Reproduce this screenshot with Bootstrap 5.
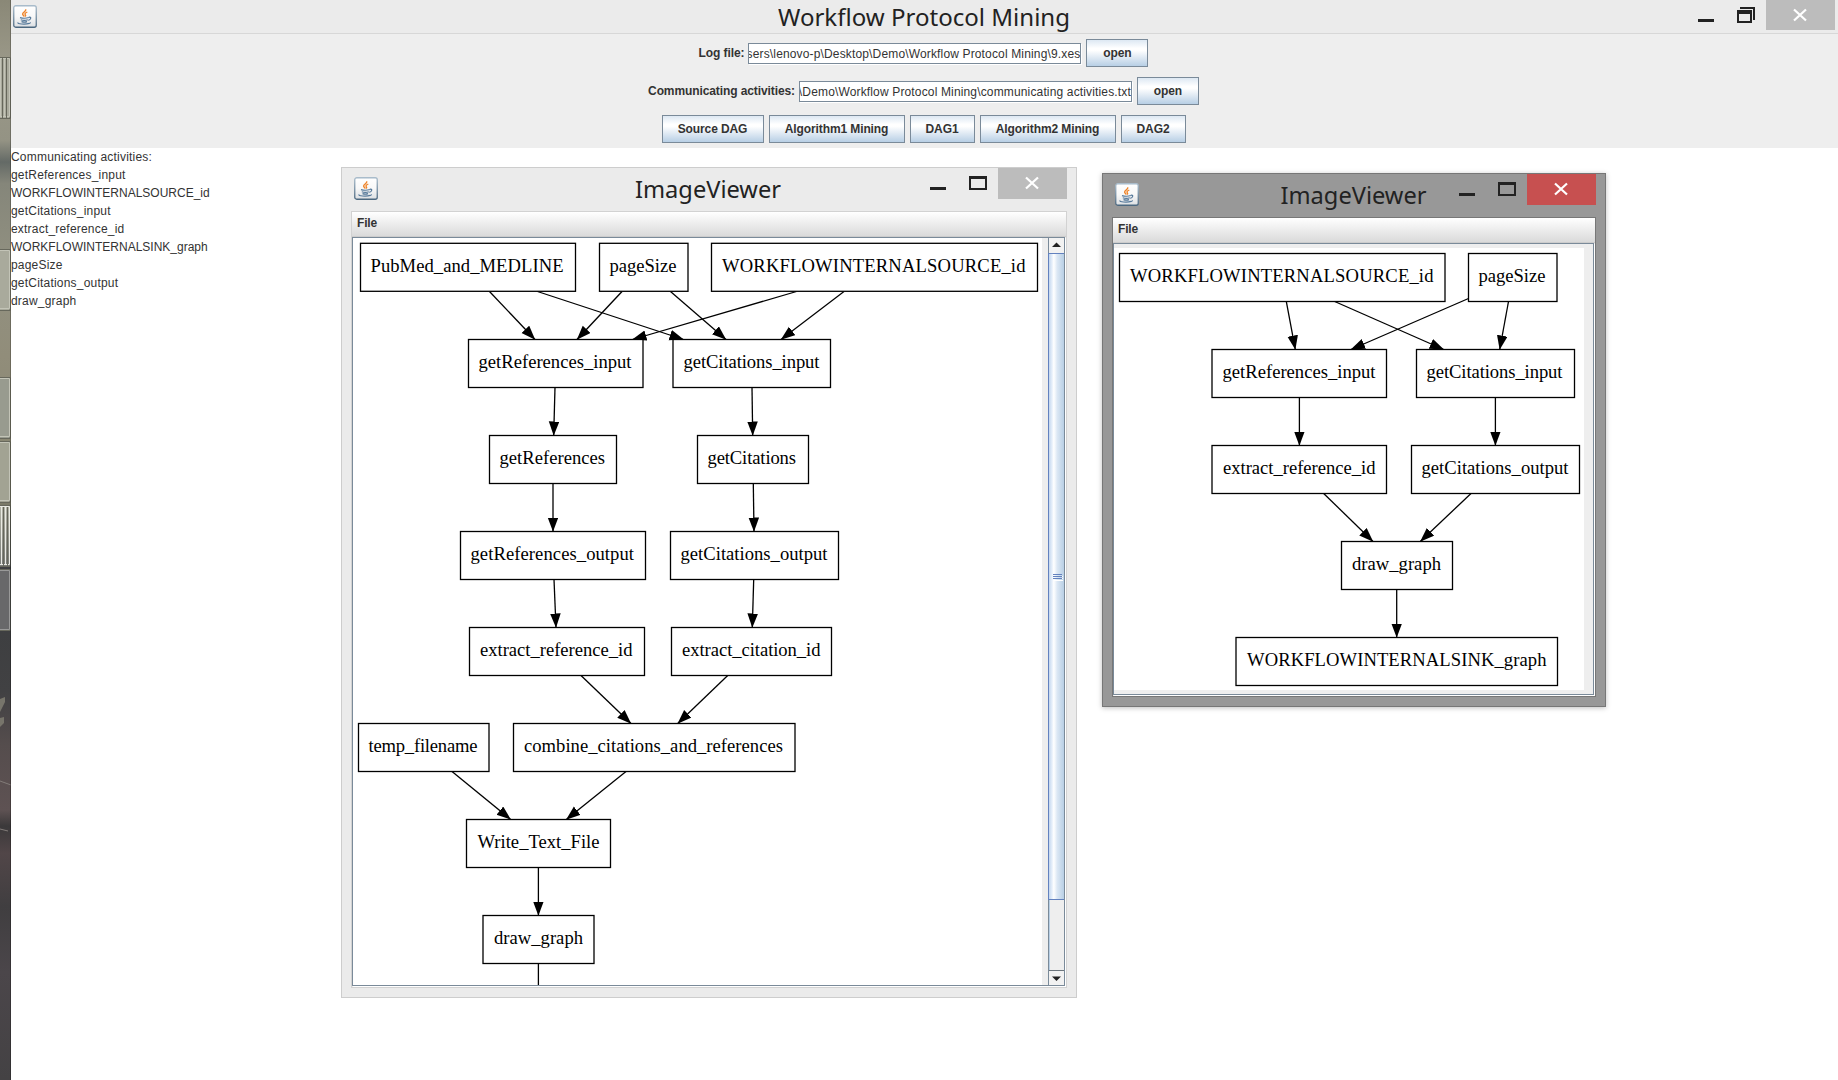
<!DOCTYPE html>
<html lang="en">
<head>
<meta charset="utf-8">
<title>Workflow Protocol Mining</title>
<link rel="stylesheet" href="https://cdn.jsdelivr.net/npm/bootstrap@5.3.0/dist/css/bootstrap.min.css">
<style>
body{width:1838px;height:1080px;font-family:"Liberation Sans",Arial,sans-serif;font-size:12px;color:#333;line-height:18px}
.desk{width:11px;height:1080px}
.titlebar{background:#ebebeb;height:34px;border-bottom:1px solid #d7d7d7}
.titlebar .appicon{margin:5px 0 0 2px}
.caption{font-family:"Noto Sans",sans-serif;font-size:23px;line-height:34px;color:#222;white-space:nowrap}
.toolbox{background:#eee;height:114px;padding:5px 2px 0 0;gap:10px}
.formrow{height:28px;font-weight:700;letter-spacing:-.1px}
.jbtn{height:28px;padding:0;border:1px solid #7a8a99;border-radius:0;font-size:12px;line-height:24px;font-weight:700;color:#333;letter-spacing:-.1px;background:linear-gradient(#dde8f3 0,#fff 32%,#fff 40%,#b8cfe5 100%)}
.jfield{width:333px;height:21px;border:1px solid #7a8a99;box-shadow:1px 1px 0 #fff;background:#fff;font-weight:400;line-height:20px;padding:0 1px;letter-spacing:.15px;white-space:nowrap}
.w52{width:62px;margin-left:5px}.w-src{width:102px}.w-alg{width:136px}.w-dag{width:65px}
.btnrow{gap:5px}
.log div{letter-spacing:.2px}
.log div.up{letter-spacing:0}
.win{background:#ebebeb;border:1px solid #cdcdcd;padding:0 9px 9px}
.win.one{left:341px;top:167px;width:736px;height:831px}
.win.two{left:1102px;top:173px;width:504px;height:534px;background:#989898;border-color:#777;box-shadow:0 1px 5px rgba(0,0,0,.25)}
.winhead{height:43px}
.client{border:1px solid #d2d2d2;background:#eee}
.two .client{border-color:#777}
.menubar{height:25px;background:linear-gradient(#fff,#dadada);border-bottom:1px solid #ccc;padding-left:5px;line-height:23px;font-weight:700;letter-spacing:-.2px}
.pane{border:1px solid #7a8a99;box-shadow:1px 1px 0 #fff;margin-right:1px;margin-bottom:1px}
.vbar{width:16px;background:#eee;border-left:1px solid #7a8a99}
.arrowbox{height:15px;background:#f2f2f2}
.thumb{height:647px;padding-top:2px;border:1px solid #6382bf;border-right:0;margin-left:-1px;background:linear-gradient(90deg,#c3d6ee,#e6effa 20%,#fff 32%,#dbe7f4 55%,#b8cfe5)}
.track{border-left:1px solid #b8cfe5}
svg{display:block}
.dag text{font-family:"Liberation Serif","Times New Roman",serif;font-size:18.6px;fill:#000}
.dag rect{fill:#fff;stroke:#000;stroke-width:1.3}
.dag path.e{stroke:#000;stroke-width:1.3;fill:none;marker-end:url(#tip)}
</style>
<script src="https://cdn.jsdelivr.net/npm/bootstrap@5.3.0/dist/js/bootstrap.bundle.min.js"></script>
</head>
<body class="d-flex bg-white overflow-hidden position-relative">
<svg width="0" height="0" class="position-absolute">
  <defs>
    <linearGradient id="cupbg" x1="0" y1="0" x2="0" y2="1"><stop offset="0" stop-color="#fff"/><stop offset=".5" stop-color="#f8f8f8"/><stop offset="1" stop-color="#dcdfe2"/></linearGradient>
    <linearGradient id="cupbd" x1="0" y1="0" x2="0" y2="1"><stop offset="0" stop-color="#a9bccb"/><stop offset="1" stop-color="#4c6880"/></linearGradient>
    <symbol id="java" viewBox="0 0 24 23">
      <rect x=".75" y=".75" width="22.5" height="21.5" rx="2" fill="url(#cupbg)" stroke="url(#cupbd)" stroke-width="1.3"/>
      <path d="M12.7 4.2c1 2-3.6 3.3-3.1 5 .2.900 1.200 1.300 1.500 2.400M14.300 7c-1.700.8-3 1.700-2 2.700.700.700.3 1.400-.2 1.900" fill="none" stroke="#ee8328" stroke-width="1.350"/>
      <path d="M7 12.600c2.500.8 6.500.7 9-.1M7.800 14.700c2 .7 5 .7 7 0M8.500 16.600c1.700.6 4 .6 5.600 0M15.800 12.300c2.800-.7 2.500 2.300-.5 3M5.300 17.600c-2 1.400 7 2 11 .8 1-.3 1.400-.7 1-1" fill="none" stroke="#56799a" stroke-width="1.200"/>
    </symbol>
    <marker id="tip" markerUnits="userSpaceOnUse" markerWidth="15" markerHeight="12" refX="14" refY="5.300" orient="auto"><path d="M0 0 14.300 5.300 0 10.600z"/></marker>
  </defs>
</svg>

<!-- strip of the desktop left of the main window -->
<svg class="desk flex-shrink-0" width="11" height="1080" viewBox="0 0 11 1080">
  <defs>
    <linearGradient id="wall" x1="0" y1="0" x2="0" y2="1">
      <stop offset="0" stop-color="#8a8877"/><stop offset=".06" stop-color="#9b9989"/><stop offset=".13" stop-color="#949384"/><stop offset=".15" stop-color="#646a66"/><stop offset=".17" stop-color="#85867a"/><stop offset=".25" stop-color="#929181"/><stop offset=".33" stop-color="#918d7a"/><stop offset=".46" stop-color="#85846f"/><stop offset=".49" stop-color="#55564f"/><stop offset=".53" stop-color="#3b3d3f"/><stop offset=".64" stop-color="#414143"/><stop offset=".69" stop-color="#554d4d"/><stop offset=".75" stop-color="#5e5253"/><stop offset=".765" stop-color="#3b393a"/><stop offset=".79" stop-color="#514648"/><stop offset=".84" stop-color="#403e40"/><stop offset=".9" stop-color="#4b464a"/><stop offset="1" stop-color="#444244"/>
    </linearGradient>
    <linearGradient id="pale" x1="0" y1="0" x2="0" y2="1"><stop offset="0" stop-color="#b4b6a8"/><stop offset="1" stop-color="#777b77"/></linearGradient>
  </defs>
  <path fill="url(#wall)" d="M0 0h11v1080H0z"/>
  <g stroke="#67685c" fill="#a9aa9c"><path d="M-1 57.500h11v61H-1z"/><path d="M-1 249.500h11v61H-1z"/><path d="M-1 377.500h11v61H-1z" fill="#989b8f"/><path d="M-1 441.500h11v61H-1z" fill="#a2a393"/><path d="M-1 505.500h11v61H-1z" fill="url(#pale)"/><path d="M-1 569.500h11v61H-1z" fill="#68686a"/></g>
  <g stroke="#c3c4b7" fill="none"><path d="M0 58.500h9.500v58H0M.5 58v59M4.500 58v59M0 250.500h9.500v58H0M0 378.500h9.500v58H0M0 442.500h9.500v58H0"/><path stroke="#e9eae2" d="M0 506.500h9.500v58H0M1.500 507v58M5.500 507v58"/><path stroke="#999" d="M0 570.500h9.500v59H0"/></g>
  <path stroke="#66675b" d="M2.500 58v60M6.500 58v60"/><path stroke="#66675b" d="M3.500 507v59M7.500 507v59"/>
  <path d="M0 699 5 697v5L0 712zM0 718l4-1v6l-4 4z" fill="#77756b"/><path d="M0 781 11 785M0 829 8 831" stroke="#827c79"/>
  <path d="M10.500 0v1080" stroke="#000" stroke-opacity=".25"/>
</svg>

<main class="flex-grow-1">
  <header class="titlebar d-flex position-relative justify-content-center">
    <svg class="appicon position-absolute start-0 top-0" width="24" height="23"><use href="#java"/></svg>
    <svg width="294" height="33"><text class="caption" x="0" y="25.500" textLength="292" lengthAdjust="spacingAndGlyphs" fill="#222">Workflow Protocol Mining</text></svg>
    <svg class="position-absolute end-0 top-0" width="140" height="33">
      <path d="M0 19h16v3H0z" fill="#222"/>
      <path d="M42 7h15v13h-2V9H42zM39 10h15v13H39zm2 4v7h11v-7z" fill="#222" fill-rule="evenodd"/>
      <path d="M68 0h69v30H68z" fill="#bcbcbc"/>
      <path d="m96 9.500 12 11M108 9.500l-12 11" stroke="#fff" stroke-width="2.200"/>
    </svg>
  </header>

  <section class="toolbox d-flex flex-column align-items-center">
    <div class="formrow d-flex align-items-center">
      <span class="me-1">Log file:</span>
      <div class="jfield d-flex justify-content-end overflow-hidden pe-0"><span>sers\lenovo-p\Desktop\Demo\Workflow Protocol Mining\9.xes</span></div>
      <button class="btn jbtn w52">open</button>
    </div>
    <div class="formrow d-flex align-items-center">
      <span class="me-1">Communicating activities:</span>
      <div class="jfield d-flex justify-content-end overflow-hidden pe-0"><span>\Demo\Workflow Protocol Mining\communicating activities.txt</span></div>
      <button class="btn jbtn w52">open</button>
    </div>
    <div class="btnrow d-flex">
      <button class="btn jbtn w-src">Source DAG</button>
      <button class="btn jbtn w-alg">Algorithm1 Mining</button>
      <button class="btn jbtn w-dag">DAG1</button>
      <button class="btn jbtn w-alg">Algorithm2 Mining</button>
      <button class="btn jbtn w-dag">DAG2</button>
    </div>
  </section>

  <section class="log">
    <div>Communicating activities:</div>
    <div>getReferences_input</div>
    <div class="up">WORKFLOWINTERNALSOURCE_id</div>
    <div>getCitations_input</div>
    <div>extract_reference_id</div>
    <div class="up">WORKFLOWINTERNALSINK_graph</div>
    <div>pageSize</div>
    <div>getCitations_output</div>
    <div>draw_graph</div>
  </section>
</main>

<!-- first viewer: the source graph -->
<section class="win one position-absolute d-flex flex-column">
  <div class="winhead">
    <svg width="716" height="43" viewBox="351 168 716 43">
      <use href="#java" x="354" y="177" width="24" height="23"/>
      <text class="caption" x="635" y="198" textLength="146" lengthAdjust="spacingAndGlyphs" fill="#222">ImageViewer</text>
      <path d="M930 187h16v3h-16z" fill="#222"/>
      <path d="M969 176h18v14h-18zm2 3v9h14v-9z" fill="#222" fill-rule="evenodd"/>
      <path d="M998 168h69v31h-69z" fill="#bcbcbc"/>
      <path d="m1026 177.500 12 11M1038 177.500l-12 11" stroke="#fff" stroke-width="2.200"/>
    </svg>
  </div>
  <div class="client flex-grow-1 d-flex flex-column">
    <div class="menubar">File</div>
    <div class="pane flex-grow-1 d-flex justify-content-between overflow-hidden">
      <svg class="dag flex-shrink-0 bg-white" width="689" height="747" viewBox="353 238 689 747">
        <path class="e" d="M489.500 291.500 535 339.500"/><path class="e" d="M537.500 291.500 683.500 339.500"/>
        <path class="e" d="M622 291.500 577 339.500"/><path class="e" d="M670.500 291.500 726 339.500"/>
        <path class="e" d="M796.500 291.500 632.500 339.500"/><path class="e" d="M844 291.500 781 339.500"/>
        <path class="e" d="M555 387.500 553.700 435.500"/><path class="e" d="M752 387.500 752.700 435.500"/>
        <path class="e" d="M553 483.500V531.500"/><path class="e" d="M753.300 483.500 754 531.500"/>
        <path class="e" d="M554 579.500 556 627.500"/><path class="e" d="M753.700 579.500 752.300 627.500"/>
        <path class="e" d="M581 675.500 631 723.500"/><path class="e" d="M727.700 675.500 677.700 723.500"/>
        <path class="e" d="M452 771.500 510.700 819.500"/><path class="e" d="M626 771.500 566.300 819.500"/>
        <path class="e" d="M538.400 867.500V915.500"/><path class="e" d="M538.400 963.500V1011"/>
        <rect x="360.500" y="243.300" width="215" height="48"/><text x="370.500" y="272" textLength="193">PubMed_and_MEDLINE</text>
        <rect x="599.500" y="243.300" width="88.500" height="48"/><text x="609.500" y="272" textLength="67">pageSize</text>
        <rect x="711.500" y="243.300" width="326" height="48"/><text x="722" y="272" textLength="303.500">WORKFLOWINTERNALSOURCE_id</text>
        <rect x="468.500" y="339.500" width="174.500" height="48"/><text x="478.500" y="368" textLength="153">getReferences_input</text>
        <rect x="673" y="339.500" width="157.500" height="48"/><text x="683.500" y="368" textLength="136">getCitations_input</text>
        <rect x="489.500" y="435.500" width="127" height="48"/><text x="499.500" y="464" textLength="105.500">getReferences</text>
        <rect x="697.500" y="435.500" width="111" height="48"/><text x="707.500" y="464" textLength="88.500">getCitations</text>
        <rect x="460.500" y="531.500" width="185" height="48"/><text x="470.500" y="560" textLength="163.500">getReferences_output</text>
        <rect x="670.500" y="531.500" width="168" height="48"/><text x="680.500" y="560" textLength="147">getCitations_output</text>
        <rect x="469.500" y="627.500" width="175" height="48"/><text x="480" y="656" textLength="152.500">extract_reference_id</text>
        <rect x="671.500" y="627.500" width="160" height="48"/><text x="682" y="656" textLength="138.500">extract_citation_id</text>
        <rect x="358.500" y="723.500" width="130.500" height="48"/><text x="368.500" y="752" textLength="109">temp_filename</text>
        <rect x="513.500" y="723.500" width="281.500" height="48"/><text x="524" y="752" textLength="259">combine_citations_and_references</text>
        <rect x="466.500" y="819.500" width="144" height="48"/><text x="477.500" y="848" textLength="122">Write_Text_File</text>
        <rect x="483" y="915.500" width="111" height="48"/><text x="494" y="944" textLength="89">draw_graph</text>
      </svg>
      <div class="vbar d-flex flex-column">
        <div class="arrowbox"><svg width="15" height="15"><path d="M3 9h9L7.500 4.500z" fill="#222"/></svg></div>
        <div class="thumb d-flex align-items-center"><svg class="ms-1" width="10" height="7"><path d="M1 1.500h9M1 3.500h9M1 5.500h9" stroke="#fff" transform="translate(0 1)"/><path d="M0 .5h9M0 2.500h9M0 4.500h9" stroke="#6382bf"/></svg></div>
        <div class="track flex-grow-1"></div>
        <div class="arrowbox border-top border-secondary"><svg width="15" height="14"><path d="M3 5.500h9L7.500 10z" fill="#222"/></svg></div>
      </div>
    </div>
  </div>
</section>

<!-- second viewer: the mined graph -->
<section class="win two position-absolute d-flex flex-column">
  <div class="winhead">
    <svg width="484" height="43" viewBox="1112 174 484 43">
      <use href="#java" x="1115" y="183" width="24" height="23"/>
      <text class="caption" x="1280.500" y="204" textLength="146" lengthAdjust="spacingAndGlyphs" fill="#222">ImageViewer</text>
      <path d="M1459 193h16v3h-16z" fill="#222"/>
      <path d="M1498 182h18v14h-18zm2 3v9h14v-9z" fill="#222" fill-rule="evenodd"/>
      <path d="M1527 174h69v31h-69z" fill="#c75050"/>
      <path d="m1555 183.500 12 11M1567 183.500l-12 11" stroke="#fff" stroke-width="2.200"/>
    </svg>
  </div>
  <div class="client flex-grow-1 d-flex flex-column">
    <div class="menubar">File</div>
    <div class="pane flex-grow-1 overflow-hidden d-flex align-items-center">
      <svg class="dag flex-shrink-0 bg-white" width="470" height="442" viewBox="1114 248 470 442">
        <path class="e" d="M1286.300 301.500 1295.300 349.500"/><path class="e" d="M1334.700 301.500 1443.700 349.500"/>
        <path class="e" d="M1468.500 298.500 1351 349.500"/><path class="e" d="M1508.500 301.500 1499.700 349.500"/>
        <path class="e" d="M1299.400 397.500V445.500"/><path class="e" d="M1495.400 397.500V445.500"/>
        <path class="e" d="M1323.700 493.500 1373 541.500"/><path class="e" d="M1471 493.500 1420.300 541.500"/>
        <path class="e" d="M1396.700 589.500V637.500"/>
        <rect x="1119.500" y="253.500" width="325.500" height="48"/><text x="1130" y="282" textLength="303.500">WORKFLOWINTERNALSOURCE_id</text>
        <rect x="1468.500" y="253.500" width="88.500" height="48"/><text x="1478.500" y="282" textLength="67">pageSize</text>
        <rect x="1212" y="349.500" width="174.500" height="48"/><text x="1222.500" y="378" textLength="153">getReferences_input</text>
        <rect x="1416.500" y="349.500" width="158" height="48"/><text x="1426.500" y="378" textLength="136">getCitations_input</text>
        <rect x="1212" y="445.500" width="174.500" height="48"/><text x="1223" y="474" textLength="152.500">extract_reference_id</text>
        <rect x="1411.500" y="445.500" width="168" height="48"/><text x="1421.500" y="474" textLength="147">getCitations_output</text>
        <rect x="1341.500" y="541.500" width="111" height="48"/><text x="1352" y="570" textLength="89">draw_graph</text>
        <rect x="1236" y="637.500" width="321.500" height="48"/><text x="1247" y="666" textLength="299.500">WORKFLOWINTERNALSINK_graph</text>
      </svg>
    </div>
  </div>
</section>
</body>
</html>
